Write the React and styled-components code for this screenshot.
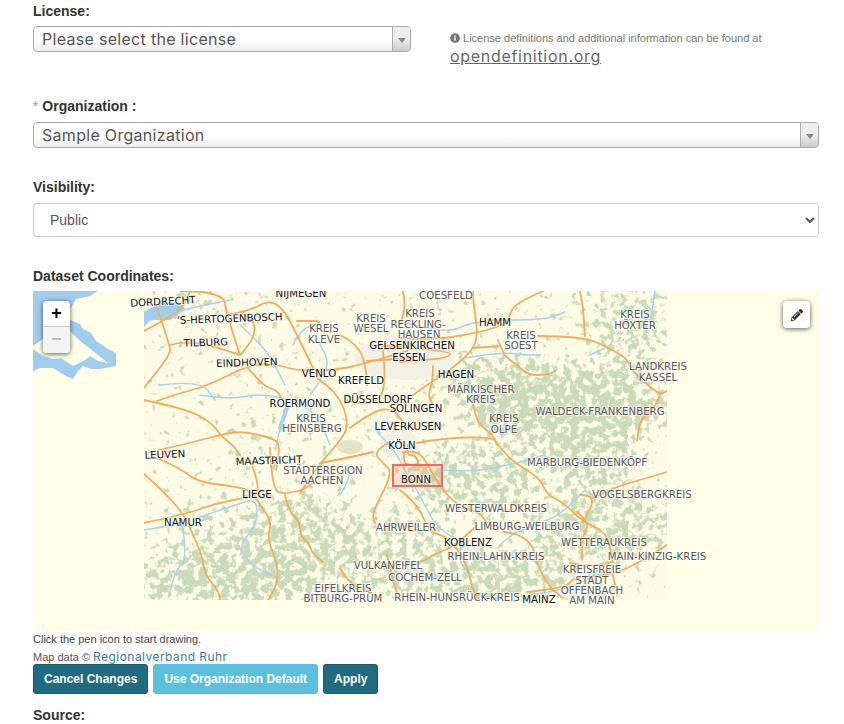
import React from 'react';
import styled, { createGlobalStyle } from 'styled-components';
import { FaInfoCircle, FaPencilAlt } from 'react-icons/fa';

// all map coordinates are page pixels, the svg viewBox starts at the map corner
const roads = [
    '157,308 170,345 170,355 144,388',
    '144,331 163,321 183,308 190,291',
    '170,345 183,341 213,346 240,355',
    '180,291 223,291 227,315 240,355',
    '227,315 250,311 268,300 283,308 297,335 313,368',
    '240,355 250,345 257,325 243,313',
    '157,401 173,395 207,386 247,366 273,363 297,371 337,370 367,363 407,351',
    '248,368 263,386 277,390 283,401',
    '144,400 183,408 210,421 223,438 233,445 240,455',
    '150,452 190,443 220,435 240,431 273,438 280,445 276,470',
    '317,378 337,391 350,425 337,445 320,463 300,493',
    '297,321 317,321',
    '340,335 360,345 367,375 367,385',
    '367,361 410,358',
    '383,351 387,388 373,405 347,401',
    '350,428 373,411 393,408 407,428',
    '400,338 433,340 477,333 500,326 508,321 513,305 543,291',
    '473,291 473,301 478,333 473,350 453,368 433,381 413,395',
    '473,348 500,346',
    '498,340 503,355 517,365 528,375 547,375 555,371',
    '538,336 583,336 613,350 628,360 630,368 643,381 660,395 667,391',
    '580,291 583,305 585,336',
    '660,395 657,405 640,420 637,441',
    '403,291 406,305 400,325',
    '433,366 433,381 428,395 433,405',
    '472,398 475,415 480,425 493,435 497,445',
    '417,443 443,438 493,437 498,445 513,462 540,478 547,495 563,502 583,522 607,532 613,562',
    '388,443 373,452 383,463 393,473 372,513 375,523',
    '320,463 347,458 373,452',
    '403,452 417,450 427,463 440,487 457,505 480,513 487,523',
    '400,490 417,503 430,533 443,535 457,548 468,568 473,592 480,600',
    '477,525 457,545 433,555 420,563 403,565',
    '143,473 160,488 183,513 190,528 202,555 205,575 218,590 220,600',
    '143,523 183,515 217,503 250,497 258,492',
    '157,458 180,468 197,482 240,487 253,493 260,505 272,522 267,538 278,565 277,585 268,600',
    '250,460 257,478 258,492',
    '270,448 272,488 283,495 313,487 322,463',
    '285,495 288,510 300,522 300,535 310,545 312,553 323,562',
    '340,568 347,582 370,592',
    '387,555 392,577 397,593',
    '577,512 590,522 582,538 582,560',
    '580,495 597,495 583,522',
    '593,498 613,488 633,482 667,472',
    '503,532 517,533 533,545 537,565 550,588 563,598',
    '527,592 567,588 573,577 613,575 640,562 667,545',
    '570,563 587,567 613,562',
    '613,575 617,595',
    '408,445 406,455 415,455 420,465 404,465 404,452',
    '370,345 450,350 450,358 400,362',
];

const rivers = [
    '144,322 165,316 190,308 230,300',
    '240,325 262,345 275,365 285,385',
    '200,395 230,400 260,393 300,402 320,420 330,445',
    '160,385 200,380 215,400',
    '287,408 280,428 276,447',
    '293,345 300,330 320,322',
    '320,345 330,360 322,378 310,395',
    '400,321 445,335 475,320 545,320 565,312',
    '465,358 500,352 525,355 540,355',
    '375,430 395,450 403,468 420,495 432,520 447,535 462,540 458,560 470,575',
    '440,470 470,472 510,465 545,455',
    '500,545 510,535 535,525 560,515 585,490',
    '200,517 235,505 257,498 257,525 237,548 255,568 278,578',
    '183,528 187,560 177,568 170,590',
    '340,495 350,480 348,465',
    '144,530 165,527 183,522',
    '530,595 565,590 590,578 620,565',
    '590,355 605,348',
    '655,291 650,325',
];

const forests = [
    [230, 578, 95, 30, 0.9], [300, 540, 60, 48, 0.75], [210, 530, 40, 28, 0.4], [470, 480, 70, 35, 0.75],
    [565, 405, 105, 42, 0.95], [480, 375, 75, 20, 0.65], [630, 325, 45, 40, 0.65], [600, 525, 75, 40, 0.7],
    [500, 578, 70, 28, 0.85], [395, 555, 55, 45, 0.65], [590, 460, 50, 25, 0.75], [200, 298, 35, 8, 0.8],
    [265, 430, 40, 25, 0.25],
];

const CITY = 'city';
const AREA = 'area';
const labels = [
    [163, 305, 'DORDRECHT', CITY, -3], [301, 297, 'NIJMEGEN', CITY], [446, 299, 'COESFELD', AREA],
    [230, 322, "'S-HERTOGENBOSCH", CITY, -2], [371, 322, 'KREIS', AREA], [371, 332, 'WESEL', AREA],
    [324, 332, 'KREIS', AREA], [324, 343, 'KLEVE', AREA], [420, 317, 'KREIS', AREA], [418, 328, 'RECKLING-', AREA],
    [419, 338, 'HAUSEN', AREA], [495, 326, 'HAMM', CITY], [521, 339, 'KREIS', AREA], [521, 349, 'SOEST', AREA],
    [635, 318, 'KREIS', AREA], [635, 329, 'HÖXTER', AREA], [206, 346, 'TILBURG', CITY, -2], [247, 366, 'EINDHOVEN', CITY, -2],
    [412, 349, 'GELSENKIRCHEN', CITY], [409, 361, 'ESSEN', CITY], [456, 378, 'HAGEN', CITY], [319, 377, 'VENLO', CITY],
    [361, 384, 'KREFELD', CITY], [658, 370, 'LANDKREIS', AREA], [658, 381, 'KASSEL', AREA], [481, 393, 'MÄRKISCHER', AREA],
    [481, 403, 'KREIS', AREA], [300, 407, 'ROERMOND', CITY], [378, 403, 'DÜSSELDORF', CITY], [416, 412, 'SOLINGEN', CITY],
    [600, 415, 'WALDECK-FRANKENBERG', AREA], [311, 422, 'KREIS', AREA], [312, 432, 'HEINSBERG', AREA], [504, 422, 'KREIS', AREA],
    [504, 433, 'OLPE', AREA], [408, 430, 'LEVERKUSEN', CITY], [402, 449, 'KÖLN', CITY], [165, 458, 'LEUVEN', CITY, -2],
    [269, 464, 'MAASTRICHT', CITY, -2], [587, 466, 'MARBURG-BIEDENKÖPF', AREA], [323, 474, 'STÄDTEREGION', AREA], [322, 484, 'AACHEN', AREA],
    [416, 483, 'BONN', CITY], [257, 498, 'LIEGE', CITY], [642, 498, 'VOGELSBERGKREIS', AREA], [496, 512, 'WESTERWALDKREIS', AREA],
    [183, 526, 'NAMUR', CITY], [527, 530, 'LIMBURG-WEILBURG', AREA], [406, 531, 'AHRWEILER', AREA], [604, 546, 'WETTERAUKREIS', AREA],
    [468, 546, 'KOBLENZ', CITY], [496, 560, 'RHEIN-LAHN-KREIS', AREA], [657, 560, 'MAIN-KINZIG-KREIS', AREA], [388, 569, 'VULKANEIFEL', AREA],
    [592, 573, 'KREISFREIE', AREA], [425, 581, 'COCHEM-ZELL', AREA], [592, 584, 'STADT', AREA], [343, 592, 'EIFELKREIS', AREA],
    [343, 602, 'BITBURG-PRÜM', AREA], [592, 594, 'OFFENBACH', AREA], [457, 601, 'RHEIN-HUNSRÜCK-KREIS', AREA], [539, 603, 'MAINZ', CITY],
    [592, 604, 'AM MAIN', AREA],
];

// rounds the corners of a "x,y x,y" list so the lines stop looking ruler drawn
const smoothPath = (points) => {
    const pts = points.split(' ').map((p) => p.split(',').map(Number));
    let d = `M${pts[0][0]} ${pts[0][1]}`;
    for (let i = 1; i < pts.length - 1; i++) {
        const midX = (pts[i][0] + pts[i + 1][0]) / 2;
        const midY = (pts[i][1] + pts[i + 1][1]) / 2;
        d += `Q${pts[i][0]} ${pts[i][1]} ${midX} ${midY}`;
    }
    const last = pts[pts.length - 1];
    return `${d}L${last[0]} ${last[1]}`;
};

function MapDrawing() {
    return (
        <MapSvg viewBox="33 291 786 340">
            <defs>
                <clipPath id="tile"><rect x="144" y="291" width="523" height="309" /></clipPath>
                <filter id="forest" x="144" y="291" width="523" height="309" filterUnits="userSpaceOnUse" colorInterpolationFilters="sRGB">
                    <feGaussianBlur in="SourceAlpha" stdDeviation="11" result="density" />
                    <feTurbulence type="fractalNoise" baseFrequency="0.14" numOctaves="3" seed="4" result="noise" />
                    <feColorMatrix in="noise" type="matrix" values="0 0 0 0 0  0 0 0 0 0  0 0 0 0 0  1 0 0 0 0" result="noiseAlpha" />
                    <feComposite in="noiseAlpha" in2="density" operator="arithmetic" k1="0" k2="1" k3="0.3" k4="0" result="sum" />
                    <feComponentTransfer in="sum" result="patches">
                        <feFuncA type="linear" slope="8" intercept="-5.2" />
                    </feComponentTransfer>
                    <feFlood floodColor="#cadbb9" />
                    <feComposite in2="patches" operator="in" />
                </filter>
                <filter id="soft"><feGaussianBlur stdDeviation="0.3" /></filter>
            </defs>
            <rect x="33" y="291" width="786" height="340" fill="#ffffe8" />
            <path
                d="M33 291H98L90 296 76 299 69 311 70 320 80 324 83 329 91 333 96 341 108 349 116 353V366L100 369 91 369 83 366 78 371 73 379 66 376 53 368 40 368 33 371Z"
                fill="#a0cdee"
            />
            <path d="M33 346 43 339 60 335 70 331 80 341 93 351 108 363 98 361 90 356 85 360 73 366 61 358 53 359 43 356 33 349Z" fill="#ffffe8" />
            <g clipPath="url(#tile)">
                <rect x="144" y="291" width="523" height="309" fill="#fdfbe6" />
                <g filter="url(#forest)">
                    {forests.map(([cx, cy, rx, ry, o]) => (
                        <ellipse key={`${cx}-${cy}`} cx={cx} cy={cy} rx={rx} ry={ry} fillOpacity={o} />
                    ))}
                </g>
                <ellipse cx="405" cy="358" rx="50" ry="22" fill="#f3f0e6" />
                <ellipse cx="400" cy="445" rx="20" ry="14" fill="#f3f0e6" />
                <ellipse cx="350" cy="447" rx="13" ry="7" fill="#e4e4c4" />
                <path d="M144 312 160 303 178 302 186 309 170 320 150 320 144 327Z" fill="#a0cdee" />
                <g fill="none" filter="url(#soft)" strokeLinejoin="round" strokeLinecap="round">
                    {rivers.map((points) => (
                        <path key={points} d={smoothPath(points)} stroke="#a8d2f2" strokeWidth="1.4" />
                    ))}
                    <path d="M287 408L280 428" stroke="#a8d2f2" strokeWidth="4" />
                    {roads.map((points) => (
                        <path key={points} d={smoothPath(points)} stroke="#f0ae5c" strokeWidth="1.8" />
                    ))}
                </g>
            </g>
            <rect x="393" y="465" width="49" height="21" fill="#f39c6b" fillOpacity="0.28" stroke="#ec6a60" strokeWidth="2" />
            {labels.map(([x, y, text, kind, tilt]) => (
                <MapLabel
                    key={`${text}-${x}-${y}`}
                    x={x}
                    y={y}
                    $kind={kind}
                    transform={tilt ? `rotate(${tilt} ${x} ${y})` : undefined}
                >
                    {text}
                </MapLabel>
            ))}
        </MapSvg>
    );
}

export default function App() {
    return (
        <>
            <GlobalStyle />
            <Page>
                <FieldLabel>License:</FieldLabel>
                <LicenseRow>
                    <LicenseField>
                        <Combo>
                            <ComboValue>Please select the license</ComboValue>
                            <ComboArrow />
                        </Combo>
                    </LicenseField>
                    <LicenseHelp>
                        <HelpLine><FaInfoCircle /> License definitions and additional information can be found at</HelpLine>
                        <HelpLink href="#">opendefinition.org</HelpLink>
                    </LicenseHelp>
                </LicenseRow>

                <OrgLabel><Required>*</Required> Organization :</OrgLabel>
                <Combo>
                    <ComboValue>Sample Organization</ComboValue>
                    <ComboArrow />
                </Combo>

                <VisibilityLabel>Visibility:</VisibilityLabel>
                <NativeSelect defaultValue="public">
                    <option value="public">Public</option>
                    <option value="private">Private</option>
                </NativeSelect>

                <CoordinatesLabel>Dataset Coordinates:</CoordinatesLabel>
                <MapFrame>
                    <MapDrawing />
                    <ZoomControl>
                        <ZoomButton>+</ZoomButton>
                        <ZoomButton $disabled>−</ZoomButton>
                    </ZoomControl>
                    <DrawButton><FaPencilAlt /></DrawButton>
                </MapFrame>
                <MapHint>Click the pen icon to start drawing.</MapHint>
                <MapCredit>Map data © <CreditLink href="#">Regionalverband Ruhr</CreditLink></MapCredit>
                <Buttons>
                    <ActionButton>Cancel Changes</ActionButton>
                    <ActionButton $light>Use Organization Default</ActionButton>
                    <ActionButton>Apply</ActionButton>
                </Buttons>
                <SourceLabel>Source:</SourceLabel>
            </Page>
        </>
    );
}

const GlobalStyle = createGlobalStyle`
    * {
        box-sizing: border-box;
    }
    html, body {
        margin: 0;
        padding: 0;
        background: #fff;
        font-family: "Liberation Sans", Arial, sans-serif;
        color: #333;
    }
`
const Page = styled.div`
    width: 844px;
    height: 724px;
    overflow: hidden;
    padding: 3px 25px 0 33px;
`
const FieldLabel = styled.label`
    display: block;
    font-size: 14px;
    line-height: 16px;
    font-weight: 700;
    margin-bottom: 7px;
`
const LicenseRow = styled.div`
    display: flex;
    align-items: flex-start;
    gap: 39px;
`
const LicenseField = styled.div`
    width: 378px;
    flex: none;
`
const LicenseHelp = styled.div`
    padding-top: 5px;
    color: #777;
`
const HelpLine = styled.div`
    font-size: 11px;
    line-height: 14px;
    svg {
        font-size: 10px;
        vertical-align: -1px;
    }
`
const HelpLink = styled.a`
    display: block;
    margin-top: 1px;
    font-family: Inter, "Liberation Sans", sans-serif;
    font-size: 16px;
    line-height: 20px;
    letter-spacing: 0.7px;
    color: #666;
    text-decoration: underline;
`
const OrgLabel = styled(FieldLabel)`
    margin-top: 32px;
    margin-bottom: 8px;
`
const Required = styled.span`
    color: #c98a8a;
    font-weight: 400;
`
const Combo = styled.div`
    display: flex;
    align-items: stretch;
    height: 26px;
    border: 1px solid #aaa;
    border-radius: 4px;
    background: linear-gradient(to bottom, #fff 50%, #eee 100%);
    overflow: hidden;
`
const ComboValue = styled.span`
    flex: 1;
    padding-left: 8px;
    font-family: Inter, "Liberation Sans", sans-serif;
    font-size: 16px;
    line-height: 25px;
    letter-spacing: 0.3px;
    color: #555;
`
const ComboArrow = styled.span`
    position: relative;
    width: 18px;
    flex: none;
    border-left: 1px solid #aaa;
    background: linear-gradient(to bottom, #eee 50%, #ccc 100%);
    &::after {
        content: "";
        position: absolute;
        left: 5px;
        top: 11px;
        border-style: solid;
        border-width: 5px 4px 0 4px;
        border-color: #888 transparent transparent transparent;
    }
`
const VisibilityLabel = styled(FieldLabel)`
    margin-top: 31px;
    margin-bottom: 8px;
`
const NativeSelect = styled.select`
    display: block;
    width: 100%;
    height: 34px;
    padding: 6px 12px;
    font-family: "Liberation Sans", Arial, sans-serif;
    font-size: 14px;
    color: #555;
    background: #fff;
    border: 1px solid #ccc;
    border-radius: 4px;
`
const CoordinatesLabel = styled(FieldLabel)`
    margin-top: 31px;
    margin-bottom: 7px;
`
const MapFrame = styled.div`
    position: relative;
    height: 340px;
`
const MapSvg = styled.svg`
    display: block;
    width: 100%;
    height: 100%;
`
const MapLabel = styled.text`
    font-family: "DejaVu Sans", sans-serif;
    font-size: 10.2px;
    text-anchor: middle;
    paint-order: stroke;
    stroke: rgba(255, 255, 255, 0.6);
    stroke-width: 2px;
    fill: ${(props) => (props.$kind === 'city' ? '#111' : '#5a5a60')};
`
const ZoomControl = styled.div`
    position: absolute;
    left: 10px;
    top: 10px;
    width: 27px;
    border-radius: 4px;
    overflow: hidden;
    box-shadow: 0 1px 5px rgba(0, 0, 0, 0.65);
`
const ZoomButton = styled.div`
    height: 26px;
    text-align: center;
    font-family: "Lucida Console", "Liberation Mono", monospace;
    font-weight: 700;
    font-size: 18px;
    line-height: 26px;
    color: ${(props) => (props.$disabled ? '#bbb' : '#000')};
    background: ${(props) => (props.$disabled ? '#f4f4f4' : '#fff')};
    border-bottom: ${(props) => (props.$disabled ? 'none' : '1px solid #ccc')};
`
const DrawButton = styled.div`
    position: absolute;
    right: 9px;
    top: 10px;
    width: 27px;
    height: 27px;
    display: flex;
    align-items: center;
    justify-content: center;
    background: #fff;
    border-radius: 4px;
    box-shadow: 0 1px 5px rgba(0, 0, 0, 0.65);
    color: #333;
    font-size: 12px;
`
const MapHint = styled.div`
    margin-top: 1px;
    font-size: 11px;
    line-height: 14px;
    color: #444;
`
const MapCredit = styled.div`
    margin-top: 4px;
    height: 14px;
    font-size: 11px;
    line-height: 14px;
    color: #555;
`
const CreditLink = styled.a`
    font-family: Inter, "Liberation Sans", sans-serif;
    font-size: 12px;
    letter-spacing: 0.45px;
    color: #3f7a9c;
    text-decoration: none;
`
const Buttons = styled.div`
    display: flex;
    gap: 5px;
`
const ActionButton = styled.button`
    height: 30px;
    padding: 0 10px;
    font-family: "Liberation Sans", Arial, sans-serif;
    font-size: 12px;
    font-weight: 700;
    color: #fff;
    background: ${(props) => (props.$light ? '#5bc0de' : '#206b82')};
    border: 1px solid ${(props) => (props.$light ? '#5bc0de' : '#1b5a6e')};
    border-radius: 3px;
`
const SourceLabel = styled(FieldLabel)`
    margin-top: 13px;
`
